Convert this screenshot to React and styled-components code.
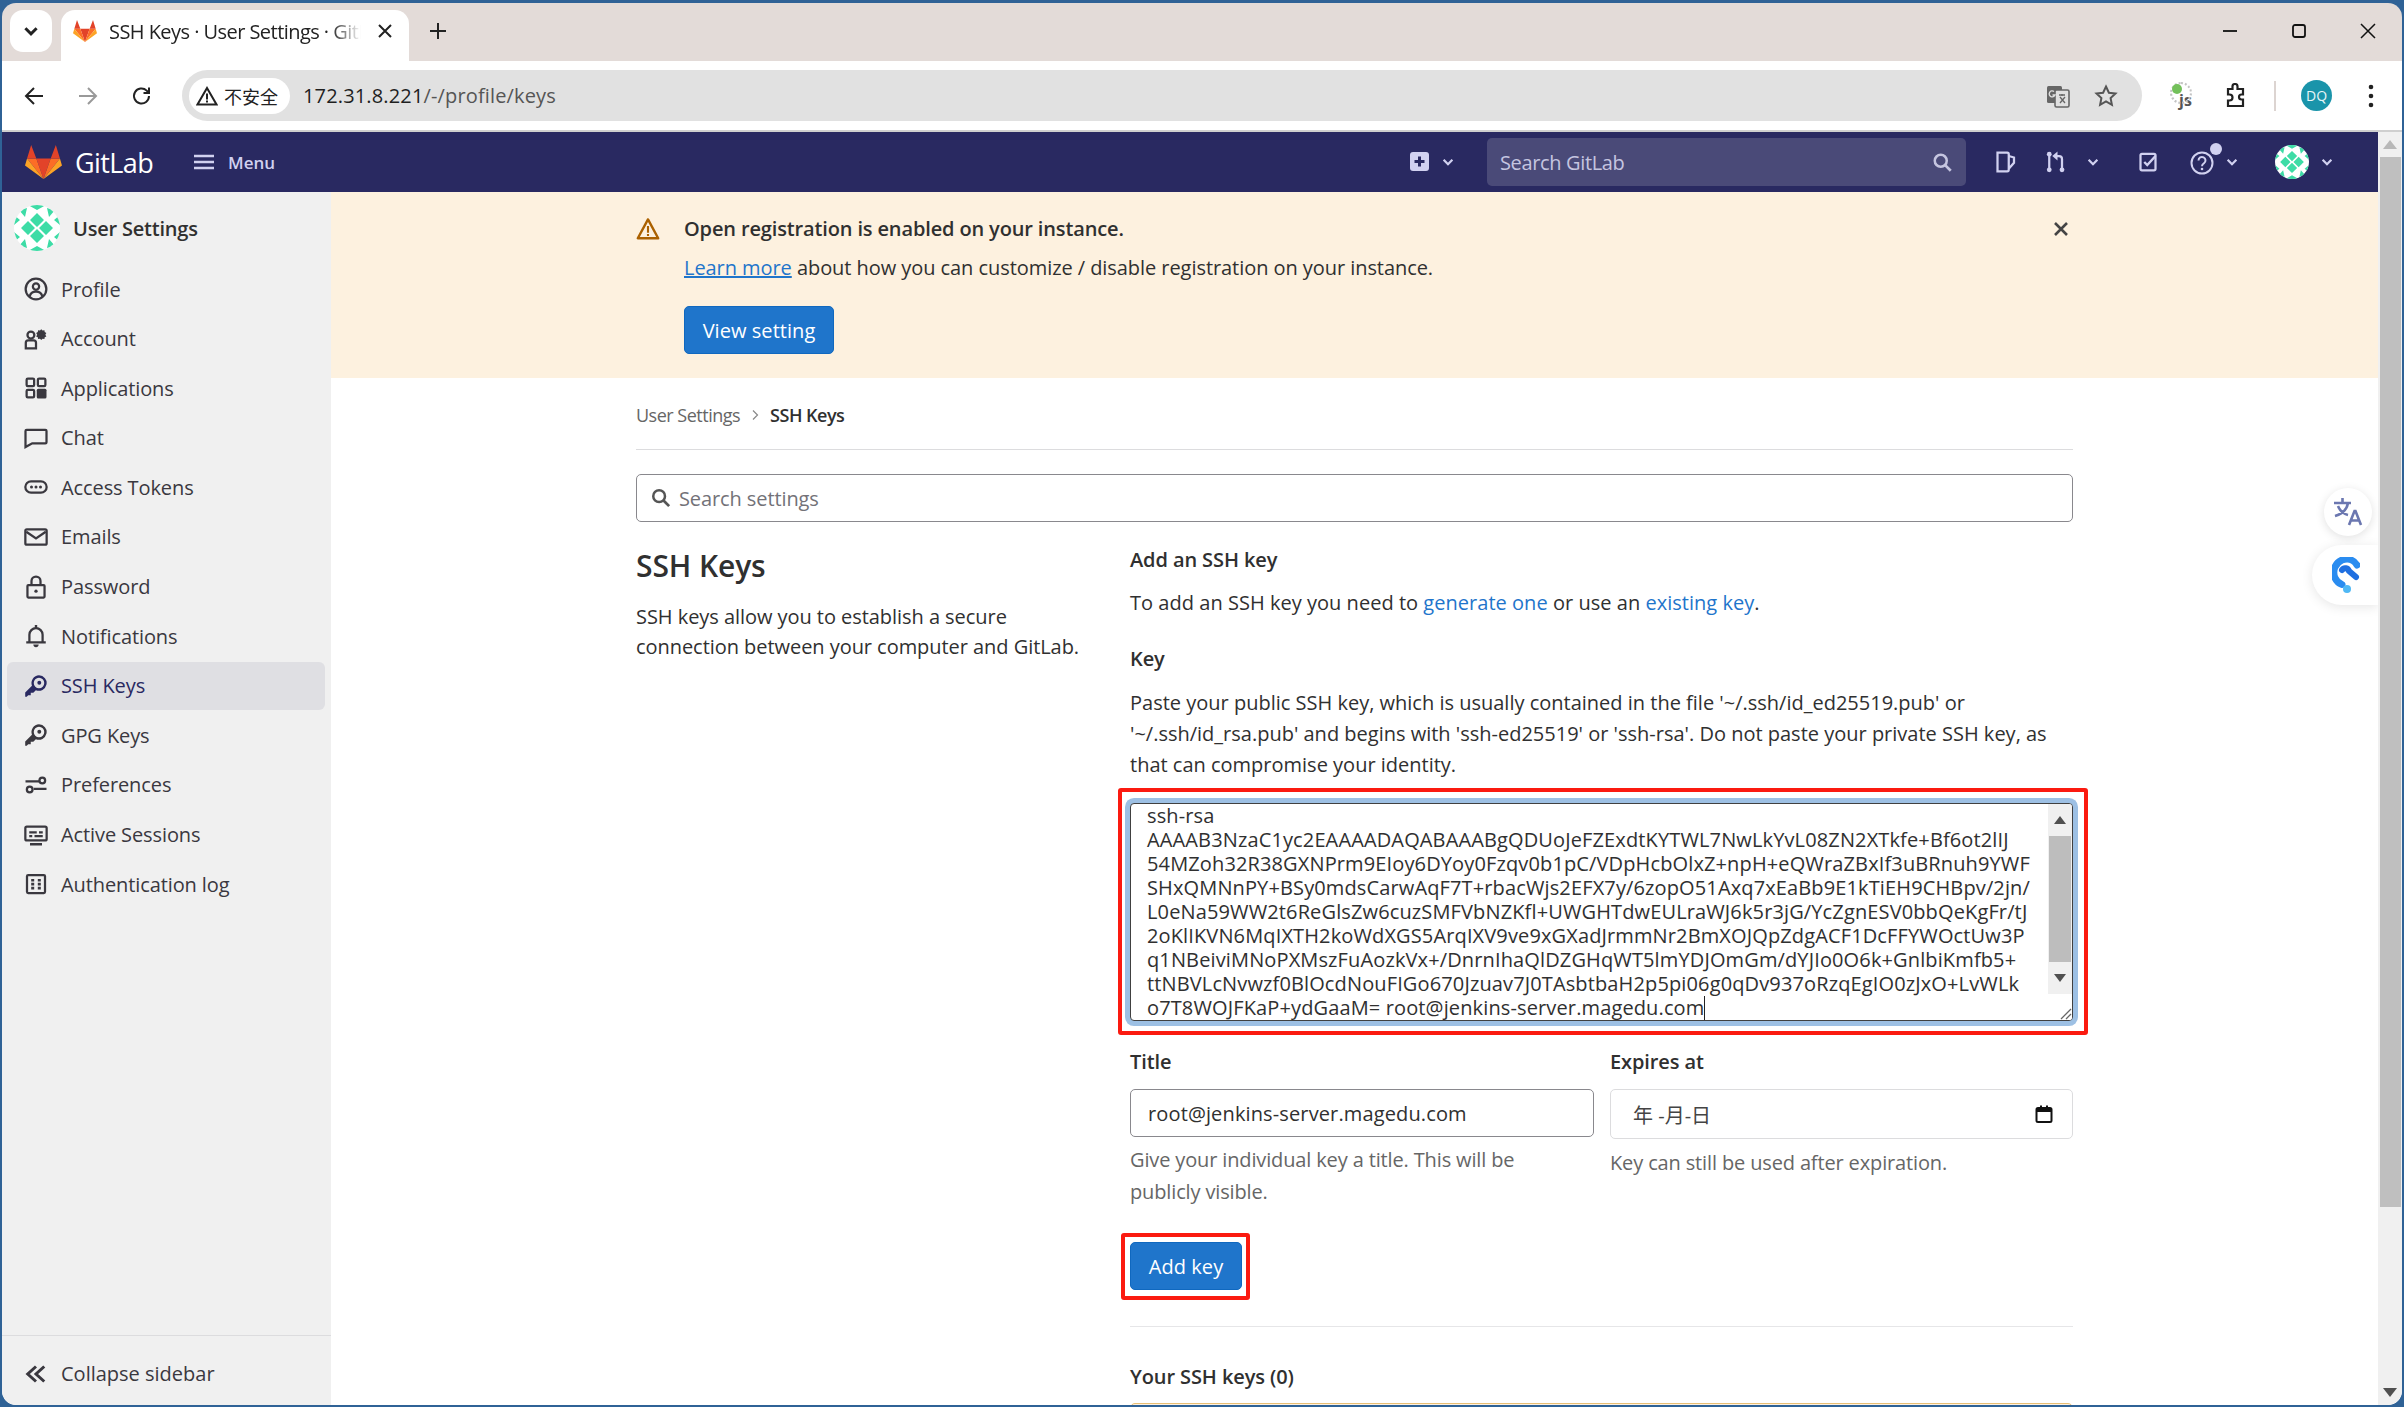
import styled, { createGlobalStyle } from 'styled-components';

const FONT = '"Open Sans", "Noto Sans CJK SC", sans-serif';

const GlobalStyle = createGlobalStyle`
  html, body {
    margin: 0;
    padding: 0;
    width: 2404px;
    height: 1407px;
    overflow: hidden;
    background: #2f6296;
    font-family: ${FONT};
  }
  * { box-sizing: border-box; }
`;

const KEY_LINES = [
  'ssh-rsa',
  'AAAAB3NzaC1yc2EAAAADAQABAAABgQDUoJeFZExdtKYTWL7NwLkYvL08ZN2XTkfe+Bf6ot2lIJ',
  '54MZoh32R38GXNPrm9EIoy6DYoy0Fzqv0b1pC/VDpHcbOlxZ+npH+eQWraZBxIf3uBRnuh9YWF',
  'SHxQMNnPY+BSy0mdsCarwAqF7T+rbacWjs2EFX7y/6zopO51Axq7xEaBb9E1kTiEH9CHBpv/2jn/',
  'L0eNa59WW2t6ReGlsZw6cuzSMFVbNZKfl+UWGHTdwEULraWJ6k5r3jG/YcZgnESV0bbQeKgFr/tJ',
  '2oKlIKVN6MqIXTH2koWdXGS5ArqIXV9ve9xGXadJrmmNr2BmXOJQpZdgACF1DcFFYWOctUw3P',
  'q1NBeiviMNoPXMszFuAozkVx+/DnrnIhaQlDZGHqWT5lmYDJOmGm/dYJIo0O6k+GnlbiKmfb5+',
  'ttNBVLcNvwzf0BlOcdNouFIGo670Jzuav7J0TAsbtbaH2p5pi06g0qDv937oRzqEgIO0zJxO+LvWLk',
];

const Tanuki = ({ size = 36 }) => (
  <svg width={size} height={size * 0.92} viewBox="0 0 36 33">
    <path fill="#e24329" d="M18 33 25 13H11z" />
    <path fill="#fc6d26" d="M18 33 11 13H2zM18 33l7-20h9z" />
    <path fill="#e24329" d="M2 13 6 0l5 13zM34 13 30 0l-5 13z" />
    <path fill="#fca326" d="M2 13 0 20l18 13zM34 13l2 7-18 13z" />
  </svg>
);

const Identicon = ({ size }) => (
  <svg width={size} height={size} viewBox="0 0 46 46">
    <defs>
      <clipPath id={`ring${size}`}><circle cx="23" cy="23" r="23" /></clipPath>
    </defs>
    <g clipPath={`url(#ring${size})`}>
      <rect width="46" height="46" fill="#fff" />
      <path fill="#3ddca6" d="M23 8l7 7-7 7-7-7zM14 16l7 7-7 7-7-7zM32 16l7 7-7 7-7-7zM23 24l7 7-7 7-7-7zM14 0h18l-9 5zM0 10l6 5-6 5zM46 10l-6 5 6 5zM0 27l6 5-6 5zM46 27l-6 5 6 5zM14 46h18l-9-5zM5 5l8-2-2 9zM41 5l-8-2 2 9zM5 41l8 2-2-9zM41 41l-8 2 2-9z" />
    </g>
  </svg>
);

const SideGlyph = ({ children, color = '#333238' }) => (
  <svg width="24" height="24" viewBox="0 0 16 16" fill={color} stroke="none">{children}</svg>
);

const lineProps = { fill: 'none', stroke: 'currentColor', strokeWidth: 1.5 };

const sideIcons = {
  profile: (
    <>
      <circle cx="8" cy="8" r="6.9" {...lineProps} />
      <circle cx="8" cy="6.4" r="2.1" {...lineProps} />
      <path {...lineProps} d="M3.8 13c.4-2.2 2-3.2 4.2-3.2s3.800 1 4.200 3.200" />
    </>
  ),
  account: (
    <>
      <circle cx="4.600" cy="5.400" r="2.300" {...lineProps} />
      <path {...lineProps} d="M1.200 14.300V10.500c0-1 .8-1.600 1.600-1.600h3.600c.9 0 1.600.6 1.600 1.600v3.800z" />
      <path d="M12 1.200l1 1.100 1.500-.3.200 1.500 1.300.8-.8 1.300.8 1.300-1.300.7-.2 1.400-1.500-.3-1 1-1-1-1.500.3-.2-1.400-1.300-.7.800-1.300-.8-1.300 1.300-.8.200-1.500 1.500.3z" transform="translate(1.300 .4) scale(.85)" />
    </>
  ),
  apps: (
    <>
      <rect x="1.750" y="1.750" width="5" height="5" rx=".8" {...lineProps} />
      <rect x="9.250" y="1.750" width="5" height="5" rx=".8" {...lineProps} />
      <rect x="1.750" y="9.250" width="5" height="5" rx=".8" {...lineProps} />
      <rect x="8.500" y="8.500" width="6.500" height="6.500" rx="1" />
    </>
  ),
  chat: <path {...lineProps} d="M1.750 2.500h12.500c.4 0 .75.300.75.750v7.500c0 .4-.3.750-.75.750H5.500L1 14V3.250c0-.4.300-.75.750-.75z" />,
  token: (
    <>
      <rect x=".9" y="4.200" width="14.200" height="7.600" rx="3.800" {...lineProps} />
      <circle cx="5" cy="8" r="1" /><circle cx="8" cy="8" r="1" /><circle cx="11" cy="8" r="1" />
    </>
  ),
  email: (
    <>
      <rect x=".9" y="2.900" width="14.200" height="10.200" rx="1" {...lineProps} />
      <path {...lineProps} d="M1.500 4.500 8 9l6.500-4.500" />
    </>
  ),
  lock: (
    <>
      <rect x="2.300" y="6.700" width="11.400" height="8.300" rx=".6" {...lineProps} />
      <path {...lineProps} d="M5 6.700V4a3 3 0 0 1 6 0v2.700" />
      <circle cx="8" cy="10.800" r="1.100" />
    </>
  ),
  bell: (
    <>
      <path {...lineProps} d="M3.600 12V7.200a4.400 4.400 0 0 1 8.800 0V12" />
      <path d="M1.500 11.500h13V13h-13zM6.200 13.700h3.600c0 1-.8 1.800-1.800 1.800s-1.800-.8-1.800-1.800zM7.200.6h1.600v2H7.200z" />
    </>
  ),
  key: (
    <>
      <path d="M10 .8a5.200 5.200 0 1 1-2.100 10L6.200 12.500H4.500V14.200H2.800L1.800 15.200H.8V12.300L5.300 7.800A5.200 5.200 0 0 1 10 .8zm0 1.700a3.500 3.500 0 1 0 0 7 3.500 3.500 0 0 0 0-7z" />
      <circle cx="10.200" cy="5.800" r="1.300" />
    </>
  ),
  prefs: (
    <>
      <path {...lineProps} d="M1 5.500h9.200M6.500 10.500H15" />
      <circle cx="12.200" cy="5" r="1.900" {...lineProps} />
      <circle cx="3.800" cy="11" r="1.900" {...lineProps} />
    </>
  ),
  sessions: (
    <>
      <rect x=".9" y="2.400" width="14.200" height="9.200" rx="1" {...lineProps} />
      <path d="M3.500 5.500h5V7h-5zM10 5.500h2.500V7H10zM3.500 8h2V9.500h-2zM7 8h5.500V9.500H7zM4 13.400h8V15H4z" />
    </>
  ),
  log: (
    <>
      <rect x="2" y="2" width="12" height="12" rx=".8" {...lineProps} />
      <path d="M4.800 4.600h2v1.800h-2zM9.200 4.600h2v1.800h-2zM4.800 7.200h2v1.800h-2zM9.200 7.200h2v1.800h-2zM4.800 9.800h2v1.800h-2zM9.200 9.800h2v1.800h-2z" />
    </>
  ),
  collapse: <path fill="none" stroke="currentColor" strokeWidth="2" d="M8 3 2.500 8 8 13M13.500 3 8 8l5.500 5" />,
};

const NAV_ITEMS = [
  ['profile', 'Profile'],
  ['account', 'Account'],
  ['apps', 'Applications'],
  ['chat', 'Chat'],
  ['token', 'Access Tokens'],
  ['email', 'Emails'],
  ['lock', 'Password'],
  ['bell', 'Notifications'],
  ['key', 'SSH Keys'],
  ['key', 'GPG Keys'],
  ['prefs', 'Preferences'],
  ['sessions', 'Active Sessions'],
  ['log', 'Authentication log'],
];

const Chevron = ({ size = 14, color = '#d1d1f0' }) => (
  <svg width={size} height={size} viewBox="0 0 16 16">
    <path d="M3 5.500 8 10.500 13 5.500" fill="none" stroke={color} strokeWidth="2.600" />
  </svg>
);

const NavIcon = ({ children, width = 24 }) => (
  <svg width={width} height="24" viewBox="0 0 16 16" fill="#d1d1f0">{children}</svg>
);

const navLine = { fill: 'none', stroke: '#d1d1f0', strokeWidth: 1.500 };

export default function App() {
  return (
    <Frame>
      <GlobalStyle />
      <TabStrip>
        <TabMenu>
          <Chevron size={18} color="#222" />
        </TabMenu>
        <Tab>
          <Tanuki size={24} />
          <TabTitle>SSH Keys · User Settings · GitLab</TabTitle>
          <TabClose>
            <svg width="16" height="16" viewBox="0 0 16 16"><path d="M2 2l12 12M14 2 2 14" stroke="#222" strokeWidth="2" /></svg>
          </TabClose>
        </Tab>
        <NewTab>
          <svg width="18" height="18" viewBox="0 0 18 18"><path d="M9 1v16M1 9h16" stroke="#222" strokeWidth="2" /></svg>
        </NewTab>
        <WindowControls>
          <svg width="16" height="16" viewBox="0 0 16 16"><path d="M1 8h14" stroke="#111" strokeWidth="1.800" /></svg>
          <svg width="16" height="16" viewBox="0 0 16 16"><rect x="2" y="2" width="12" height="12" rx="2" fill="none" stroke="#111" strokeWidth="1.800" /></svg>
          <svg width="16" height="16" viewBox="0 0 16 16"><path d="M1 1l14 14M15 1 1 15" stroke="#111" strokeWidth="1.500" /></svg>
        </WindowControls>
      </TabStrip>

      <Toolbar>
        <ToolIcon>
          <svg width="22" height="22" viewBox="0 0 22 22"><path d="M20 11H3M11 3l-8 8 8 8" fill="none" stroke="#222" strokeWidth="2" /></svg>
        </ToolIcon>
        <ToolIcon>
          <svg width="22" height="22" viewBox="0 0 22 22"><path d="M2 11h17M11 3l8 8-8 8" fill="none" stroke="#999" strokeWidth="2" /></svg>
        </ToolIcon>
        <ToolIcon>
          <svg width="22" height="22" viewBox="0 0 22 22"><path d="M18 11a7.500 7.500 0 1 1-2.300-5.400L18 8M18 2.500V8h-5.500" fill="none" stroke="#222" strokeWidth="2" /></svg>
        </ToolIcon>
        <Omnibox>
          <SecurityChip>
            <svg width="22" height="20" viewBox="0 0 22 20"><path d="M11 2 1.500 18.500h19z" fill="none" stroke="#222" strokeWidth="2" /><path d="M10 7.500h2v6h-2zM10 14.500h2v2h-2z" fill="#222" /></svg>
            不安全
          </SecurityChip>
          <Url><b>172.31.8.221</b>/-/profile/keys</Url>
          <OmniActions>
            <svg width="24" height="24" viewBox="0 0 24 24"><rect x="1" y="2" width="15" height="17" rx="1.500" fill="#666" /><rect x="9" y="6" width="14" height="17" rx="1.500" fill="#e0e0e0" stroke="#666" strokeWidth="1.600" /><path d="M13 11h6M16 10v2M14 19l5-6M14 13l5 6" stroke="#666" strokeWidth="1.300" /><path d="M8 7.500a3 3 0 1 0 1 3.500H6.500" fill="none" stroke="#e0e0e0" strokeWidth="1.300" /></svg>
            <svg width="24" height="24" viewBox="0 0 24 24"><path d="M12 2.500l2.900 6.200 6.600.8-4.900 4.600 1.300 6.700L12 17.500l-5.900 3.300 1.300-6.700-4.900-4.600 6.600-.8z" fill="none" stroke="#555" strokeWidth="2" /></svg>
          </OmniActions>
        </Omnibox>
        <ToolEnd>
          <JsBadge>
            <JsRing />
            <JsDot />
            js
          </JsBadge>
          <svg width="20" height="26" viewBox="0 0 20 26"><path d="M2 6h4.500V3.500a2.500 2.500 0 0 1 5 0V6H17v5.500h-1.500a2.500 2.500 0 0 0 0 5H17V23H2v-5.500h1.500a3 3 0 0 0 0-6H2z" fill="none" stroke="#222" strokeWidth="2.200" /></svg>
          <ToolSep />
          <ProfileChip>DQ</ProfileChip>
          <svg width="6" height="26" viewBox="0 0 6 26"><circle cx="3" cy="4" r="2.300" fill="#222" /><circle cx="3" cy="13" r="2.300" fill="#222" /><circle cx="3" cy="22" r="2.300" fill="#222" /></svg>
        </ToolEnd>
      </Toolbar>

      <Viewport>
        <PageColumn>
          <TopNav>
            <Brand>
              <Tanuki size={37} />
              <BrandName>GitLab</BrandName>
            </Brand>
            <MenuButton>
              <svg width="20" height="18" viewBox="0 0 20 18"><path d="M0 3h20M0 9h20M0 15h20" stroke="#d1d1f0" strokeWidth="2.400" /></svg>
              Menu
            </MenuButton>
            <NavEnd>
              <NavSlot $width={46}>
                <svg width="22" height="22" viewBox="0 0 22 22"><rect x="1" y="1" width="19" height="19" rx="3" fill="#d1d1f0" /><path d="M10.500 5.500v10M5.500 10.500h10" stroke="#292961" strokeWidth="3" /></svg>
                <Chevron />
              </NavSlot>
              <NavSearch>
                Search GitLab
                <svg width="20" height="20" viewBox="0 0 16 16"><circle cx="7" cy="7" r="4.800" fill="none" stroke="#c5c5e0" strokeWidth="2" /><path d="M10.500 10.500 15 15" stroke="#c5c5e0" strokeWidth="2.200" /></svg>
              </NavSearch>
              <NavSlot $width={24} $left={27}>
                <NavIcon>
                  <path {...navLine} d="M3 1.800h6.500c.6 0 1 .4 1 1V13c0 .6-.4 1.200-1 1.200H3zM10.500 4l3.500 1v3.500l-3.500 4" />
                </NavIcon>
              </NavSlot>
              <NavSlot $width={56} $left={27}>
                <NavIcon>
                  <circle cx="3.500" cy="2.800" r="1.600" /><circle cx="3.500" cy="13.200" r="1.600" /><circle cx="12" cy="13.200" r="1.600" />
                  <path {...navLine} d="M3.500 3v10M12 13V6c0-1-.7-2-2-2H7.500" />
                  <path d="M9 1v6L5.500 4z" />
                </NavIcon>
                <Chevron />
              </NavSlot>
              <NavSlot $width={24} $left={36}>
                <NavIcon>
                  <rect x="3" y="2.500" width="10" height="11" rx="1" fill="none" stroke="#d1d1f0" strokeWidth="1.500" />
                  <path d="M5.500 8l2 2L13 4" fill="none" stroke="#d1d1f0" strokeWidth="1.600" />
                </NavIcon>
              </NavSlot>
              <HelpGroup>
                <svg width="26" height="26" viewBox="0 0 26 26"><circle cx="12" cy="14" r="10.500" fill="none" stroke="#d1d1f0" strokeWidth="2" /><path d="M8.500 11.500a3.500 3.500 0 1 1 5.500 2.800c-1.300.9-2 1.500-2 3" fill="none" stroke="#d1d1f0" strokeWidth="2" /><circle cx="12" cy="20" r="1.300" fill="#d1d1f0" /></svg>
                <HelpDot />
                <Chevron />
              </HelpGroup>
              <NavSlot $width={59} $left={36}>
                <Identicon size={34} />
                <Chevron />
              </NavSlot>
            </NavEnd>
          </TopNav>

          <Body>
            <Sidebar>
              <SideHead>
                <Identicon size={46} />
                <SideTitle>User Settings</SideTitle>
              </SideHead>
              <SideList>
                {NAV_ITEMS.map(([icon, label]) => {
                  const active = label === 'SSH Keys';
                  return (
                    <SideItem key={label} $active={active}>
                      <SideGlyph color="currentColor">{sideIcons[icon]}</SideGlyph>
                      <span>{label}</span>
                    </SideItem>
                  );
                })}
              </SideList>
              <CollapseRow>
                <SideGlyph color="currentColor">{sideIcons.collapse}</SideGlyph>
                <span>Collapse sidebar</span>
              </CollapseRow>
            </Sidebar>

            <Main>
              <Banner>
                <Container>
                  <BannerRow>
                    <WarnIcon>
                      <svg width="24" height="24" viewBox="0 0 16 16"><path d="M8 1.600 1.200 14.200h13.600z" fill="none" stroke="#ab6100" strokeWidth="1.600" strokeLinejoin="round" /><path d="M7.300 6h1.400v4.500H7.300zM7.300 11.300h1.400v1.400H7.300z" fill="#ab6100" /></svg>
                    </WarnIcon>
                    <BannerText>
                      <BannerTitle>Open registration is enabled on your instance.</BannerTitle>
                      <BannerBody><BannerLink>Learn more</BannerLink> about how you can customize / disable registration on your instance.</BannerBody>
                      <PrimaryButton $width={150} $top={23}>View setting</PrimaryButton>
                    </BannerText>
                    <BannerClose>
                      <svg width="16" height="16" viewBox="0 0 16 16"><path d="M2 2l12 12M14 2 2 14" stroke="#444" strokeWidth="2.600" /></svg>
                    </BannerClose>
                  </BannerRow>
                </Container>
              </Banner>

              <Container>
                <Breadcrumbs>
                  <CrumbLink>User Settings</CrumbLink>
                  <svg width="10" height="12" viewBox="0 0 10 12"><path d="M3 1.500 7.500 6 3 10.500" fill="none" stroke="#888" strokeWidth="1.200" /></svg>
                  <CrumbCurrent>SSH Keys</CrumbCurrent>
                </Breadcrumbs>
                <SettingsSearch>
                  <svg width="20" height="20" viewBox="0 0 16 16"><circle cx="6.500" cy="6.500" r="4.700" fill="none" stroke="#555" strokeWidth="2" /><path d="M10 10l4.500 4.500" stroke="#555" strokeWidth="2.200" /></svg>
                  Search settings
                </SettingsSearch>

                <SettingsGrid>
                  <IntroColumn>
                    <IntroTitle>SSH Keys</IntroTitle>
                    <IntroText>SSH keys allow you to establish a secure connection between your computer and GitLab.</IntroText>
                  </IntroColumn>
                  <FormColumn>
                    <Label $top={0}>Add an SSH key</Label>
                    <Paragraph $top={13}>
                      To add an SSH key you need to <TextLink>generate one</TextLink> or use an <TextLink>existing key</TextLink>.
                    </Paragraph>
                    <Label $top={26}>Key</Label>
                    <KeyHelp>
                      Paste your public SSH key, which is usually contained in the file '~/.ssh/id_ed25519.pub' or<br />
                      '~/.ssh/id_rsa.pub' and begins with 'ssh-ed25519' or 'ssh-rsa'. Do not paste your private SSH key, as<br />
                      that can compromise your identity.
                    </KeyHelp>
                    <KeyMark>
                      <KeyArea>
                        <KeyText>
                          {KEY_LINES.map((line) => <KeyLine key={line}>{line}</KeyLine>)}
                          <KeyLine>o7T8WOJFKaP+ydGaaM= root@jenkins-server.magedu.com<Caret /></KeyLine>
                        </KeyText>
                        <KeyScroll>
                          <ScrollArrow>
                            <svg width="12" height="8" viewBox="0 0 12 8"><path d="M6 0l6 8H0z" fill="#505050" /></svg>
                          </ScrollArrow>
                          <ScrollThumb />
                          <ScrollArrow>
                            <svg width="12" height="8" viewBox="0 0 12 8"><path d="M6 8l6-8H0z" fill="#505050" /></svg>
                          </ScrollArrow>
                          <ScrollGrip>
                            <svg width="14" height="14" viewBox="0 0 14 14"><path d="M13 3 3 13M13 8l-5 5" stroke="#666" strokeWidth="1.300" /></svg>
                          </ScrollGrip>
                        </KeyScroll>
                      </KeyArea>
                    </KeyMark>
                    <FieldGrid>
                      <Field>
                        <Label $top={0}>Title</Label>
                        <TextField>root@jenkins-server.magedu.com</TextField>
                        <FieldHelp $top={7}>Give your individual key a title. This will be<br />publicly visible.</FieldHelp>
                      </Field>
                      <Field>
                        <Label $top={0}>Expires at</Label>
                        <DateField>
                          <DateText>年 -月-日</DateText>
                          <svg width="20" height="20" viewBox="0 0 20 20"><rect x="2.500" y="4" width="15" height="14" rx="1.500" fill="none" stroke="#111" strokeWidth="2" /><path d="M2.500 4.500h15v3.500h-15zM6 1.500h2v3H6zM12 1.500h2v3h-2z" fill="#111" /></svg>
                        </DateField>
                        <FieldHelp $top={8}>Key can still be used after expiration.</FieldHelp>
                      </Field>
                    </FieldGrid>
                    <ButtonMark>
                      <PrimaryButton $width={112}>Add key</PrimaryButton>
                    </ButtonMark>
                    <Divider />
                    <Label $top={0}>Your SSH keys (0)</Label>
                    <EmptyNotice />
                  </FormColumn>
                </SettingsGrid>
              </Container>
              <FloatCircle>
                <svg width="32" height="32" viewBox="0 0 32 32" fill="none" stroke="#6b77b0" strokeWidth="2.600"><path d="M2 7h17M10.500 2v5M16 7c-1 6-6 11-13 13M6 10c2 5 6 8 10 9" /><path d="M17 29l5.500-14h1L29 29M19 24.500h8" /></svg>
              </FloatCircle>
              <FloatPill>
                <svg width="28" height="36" viewBox="0 0 28 36"><path d="M25 8C22 3 16 1 10 3 3 6 0 14 3 21c1.500 3.500 4 5.500 7 6.500" fill="none" stroke="#2a8cf0" strokeWidth="7" strokeLinecap="round" /><path d="M10 13c2-3 6-2 7 1l7 6" fill="none" stroke="#1f6fe0" strokeWidth="6" strokeLinecap="round" /><circle cx="15" cy="32" r="4" fill="#4fb8f5" /></svg>
              </FloatPill>
            </Main>
          </Body>
        </PageColumn>

        <PageScroll>
          <PageArrow>
            <svg width="14" height="9" viewBox="0 0 14 9"><path d="M7 0l7 9H0z" fill="#b8b8b8" /></svg>
          </PageArrow>
          <PageThumb />
          <PageArrow>
            <svg width="14" height="9" viewBox="0 0 14 9"><path d="M7 9l7-9H0z" fill="#505050" /></svg>
          </PageArrow>
        </PageScroll>
      </Viewport>
    </Frame>
  );
}

const Frame = styled.div`
  width: 2404px;
  height: 1407px;
  padding: 3px 2px 2px;
  display: flex;
  flex-direction: column;
  overflow: hidden;
`;

const TabStrip = styled.div`
  height: 58px;
  flex: none;
  display: flex;
  align-items: flex-start;
  padding: 7px 0 0 8px;
  background: #e3dbd8;
  border-radius: 14px 14px 0 0;
`;

const TabMenu = styled.div`
  width: 42px;
  height: 42px;
  border-radius: 13px;
  background: #fff;
  display: flex;
  align-items: center;
  justify-content: center;
`;

const Tab = styled.div`
  width: 348px;
  height: 51px;
  margin-left: 9px;
  padding: 0 16px 9px 12px;
  background: #fff;
  border-radius: 14px 14px 0 0;
  display: flex;
  align-items: center;
  gap: 12px;
`;

const TabTitle = styled.span`
  width: 252px;
  flex: none;
  font-size: 20px;
  letter-spacing: -0.55px;
  color: #222;
  white-space: nowrap;
  overflow: hidden;
  -webkit-mask-image: linear-gradient(to right, #000 88%, transparent);
  mask-image: linear-gradient(to right, #000 88%, transparent);
`;

const TabClose = styled.span`
  display: flex;
  margin-left: 4px;
`;

const NewTab = styled.div`
  height: 42px;
  margin-left: 20px;
  display: flex;
  align-items: center;
`;

const WindowControls = styled.div`
  margin-left: auto;
  height: 42px;
  width: 200px;
  padding-left: 20px;
  display: flex;
  align-items: center;
  gap: 53px;
`;

const Toolbar = styled.div`
  height: 71px;
  flex: none;
  padding: 9px 0 0 5px;
  background: #fff;
  border-bottom: 2px solid #cfcfcf;
  display: flex;
  align-items: flex-start;
`;

const ToolIcon = styled.div`
  width: 54px;
  height: 51px;
  display: flex;
  align-items: center;
  justify-content: center;
  flex: none;
`;

const Omnibox = styled.div`
  width: 1960px;
  height: 51px;
  margin-left: 13px;
  padding: 0 24px 0 7px;
  flex: none;
  background: #e1e1e1;
  border-radius: 26px;
  display: flex;
  align-items: center;
`;

const SecurityChip = styled.div`
  width: 101px;
  height: 36px;
  padding-left: 7px;
  flex: none;
  background: #fff;
  border-radius: 18px;
  display: flex;
  align-items: center;
  gap: 6px;
  font-size: 18px;
  color: #222;
`;

const Url = styled.div`
  margin-left: 13px;
  font-size: 20px;
  letter-spacing: 0.15px;
  color: #555;
  b {
    font-weight: 400;
    color: #1f1f1f;
  }
`;

const OmniActions = styled.div`
  margin-left: auto;
  display: flex;
  gap: 24px;
  align-items: center;
`;

const ToolEnd = styled.div`
  height: 51px;
  margin-left: 28px;
  display: flex;
  align-items: center;
  & > svg:nth-of-type(1) {
    margin-left: 30px;
  }
`;

const JsBadge = styled.div`
  position: relative;
  width: 26px;
  height: 30px;
  padding: 11px 0 0 9px;
  font-size: 16px;
  font-weight: 700;
  line-height: 16px;
  color: #555;
`;

const JsRing = styled.span`
  position: absolute;
  top: 1px;
  left: 0;
  width: 22px;
  height: 22px;
  border: 2px dotted #c4c4c4;
  border-radius: 50%;
`;

const JsDot = styled.span`
  position: absolute;
  top: 3px;
  left: 2px;
  width: 10px;
  height: 10px;
  border-radius: 50%;
  background: #73c05a;
`;

const ToolSep = styled.div`
  width: 2px;
  height: 30px;
  margin: 0 25px 0 28px;
  background: #dcd4d1;
`;

const ProfileChip = styled.div`
  width: 31px;
  height: 31px;
  margin-right: 36px;
  border-radius: 50%;
  background: #1a94aa;
  color: #e8f6f8;
  font-size: 14px;
  display: flex;
  align-items: center;
  justify-content: center;
`;

const Viewport = styled.div`
  flex: 1;
  min-height: 0;
  display: flex;
  background: #fff;
  border-radius: 0 0 14px 14px;
  overflow: hidden;
`;

const PageColumn = styled.div`
  flex: 1;
  min-width: 0;
  display: flex;
  flex-direction: column;
`;

const TopNav = styled.header`
  height: 60px;
  flex: none;
  padding-left: 23px;
  background: #292961;
  display: flex;
  align-items: center;
`;

const Brand = styled.div`
  display: flex;
  align-items: center;
  gap: 13px;
`;

const BrandName = styled.span`
  font-size: 27px;
  font-weight: 400;
  letter-spacing: -0.6px;
  color: #fff;
`;

const MenuButton = styled.div`
  margin-left: 41px;
  display: flex;
  align-items: center;
  gap: 14px;
  font-size: 17px;
  font-weight: 600;
  color: #d1d1f0;
`;

const NavEnd = styled.div`
  margin-left: auto;
  padding-right: 44px;
  display: flex;
  align-items: center;
`;

const NavSlot = styled.div`
  width: ${(p) => p.$width}px;
  margin-left: ${(p) => p.$left || 0}px;
  flex: none;
  display: flex;
  align-items: center;
  justify-content: space-between;
`;

const NavSearch = styled.div`
  width: 479px;
  height: 48px;
  margin-left: 32px;
  padding: 0 14px 0 13px;
  background: #4a4a78;
  border-radius: 5px;
  display: flex;
  align-items: center;
  justify-content: space-between;
  font-size: 20px;
  letter-spacing: -0.35px;
  color: #c5c5e0;
`;

const HelpGroup = styled.div`
  position: relative;
  width: 49px;
  margin-left: 30px;
  flex: none;
  display: flex;
  align-items: center;
  justify-content: space-between;
`;

const HelpDot = styled.span`
  position: absolute;
  top: -6px;
  left: 20px;
  width: 12px;
  height: 12px;
  border-radius: 50%;
  background: #d1d1f0;
`;

const Body = styled.div`
  flex: 1;
  min-height: 0;
  display: flex;
`;

const Sidebar = styled.aside`
  width: 329px;
  flex: none;
  background: #f0f0f0;
  display: flex;
  flex-direction: column;
  border-bottom-left-radius: 14px;
`;

const SideHead = styled.div`
  height: 73px;
  padding: 13px 0 0 12px;
  display: flex;
  align-items: flex-start;
  gap: 13px;
`;

const SideTitle = styled.span`
  font-size: 20px;
  font-weight: 600;
  line-height: 48px;
  letter-spacing: -0.2px;
  color: #303030;
`;

const SideList = styled.nav`
  padding: 0 6px 0 5px;
  display: flex;
  flex-direction: column;
  gap: 1.6px;
`;

const SideItem = styled.div`
  height: 48px;
  padding-left: 17px;
  border-radius: 6px;
  display: flex;
  align-items: center;
  gap: 13px;
  font-size: 20px;
  letter-spacing: -0.1px;
  color: ${(p) => (p.$active ? '#292961' : '#3a383f')};
  background: ${(p) => (p.$active ? '#dfdfe3' : 'transparent')};
`;

const CollapseRow = styled.div`
  margin-top: auto;
  height: 70px;
  padding: 6px 0 0 22px;
  border-top: 1px solid #dcdcde;
  display: flex;
  align-items: center;
  gap: 13px;
  font-size: 20px;
  color: #3a383f;
`;

const Main = styled.main`
  position: relative;
  flex: 1;
  min-width: 0;
  overflow: hidden;
`;

const Container = styled.div`
  width: 1437px;
  margin: 0 auto;
`;

const Banner = styled.section`
  height: 186px;
  background: #fdf1df;
`;

const BannerRow = styled.div`
  display: flex;
  align-items: flex-start;
  padding-top: 22px;
`;

const WarnIcon = styled.div`
  width: 48px;
  height: 30px;
  flex: none;
  display: flex;
  align-items: center;
`;

const BannerText = styled.div`
  flex: 1;
`;

const BannerClose = styled.div`
  width: 24px;
  height: 30px;
  padding-right: 4px;
  flex: none;
  display: flex;
  align-items: center;
  justify-content: flex-end;
`;

const BannerTitle = styled.div`
  font-size: 20px;
  font-weight: 600;
  line-height: 30px;
  letter-spacing: -0.14px;
  color: #303030;
`;

const BannerBody = styled.div`
  margin-top: 9px;
  font-size: 20px;
  line-height: 30px;
  letter-spacing: -0.06px;
  color: #303030;
`;

const BannerLink = styled.a`
  color: #1f75cb;
  text-decoration: underline;
`;

const PrimaryButton = styled.div`
  width: ${(p) => p.$width}px;
  height: 48px;
  margin-top: ${(p) => p.$top || 0}px;
  background: #1f75cb;
  border: 1px solid #1068bf;
  border-radius: 5px;
  color: #fff;
  font-size: 20px;
  letter-spacing: 0.05px;
  display: flex;
  align-items: center;
  justify-content: center;
`;

const Breadcrumbs = styled.div`
  height: 72px;
  padding: 22px 0 19px;
  border-bottom: 1px solid #dcdcde;
  display: flex;
  align-items: center;
  gap: 10px;
  font-size: 18px;
`;

const CrumbLink = styled.span`
  color: #666;
  letter-spacing: -0.5px;
`;

const CrumbCurrent = styled.span`
  color: #303030;
  font-weight: 600;
  letter-spacing: -0.5px;
`;

const SettingsSearch = styled.div`
  height: 48px;
  margin-top: 24px;
  padding-left: 14px;
  border: 1.500px solid #89888d;
  border-radius: 5px;
  display: flex;
  align-items: center;
  gap: 8px;
  font-size: 20px;
  letter-spacing: -0.1px;
  color: #737278;
`;

const SettingsGrid = styled.div`
  display: grid;
  grid-template-columns: 494px 943px;
`;

const IntroColumn = styled.div`
  padding-top: 24px;
`;

const IntroTitle = styled.h2`
  margin: 0;
  font-size: 30px;
  line-height: 40px;
  font-weight: 600;
  letter-spacing: -0.1px;
  color: #303030;
`;

const IntroText = styled.p`
  width: 470px;
  margin: 16px 0 0;
  font-size: 20px;
  line-height: 30px;
  letter-spacing: -0.05px;
  color: #303030;
`;

const FormColumn = styled.div`
  padding-top: 23px;
`;

const Label = styled.div`
  margin-top: ${(p) => p.$top}px;
  font-size: 20px;
  line-height: 30px;
  font-weight: 600;
  letter-spacing: -0.1px;
  color: #303030;
`;

const Paragraph = styled.p`
  margin: ${(p) => p.$top}px 0 0;
  font-size: 20px;
  line-height: 30px;
  letter-spacing: 0.03px;
  color: #303030;
`;

const TextLink = styled.a`
  color: #1f75cb;
`;

const KeyHelp = styled.p`
  margin: 13px 0 0;
  font-size: 20px;
  line-height: 31px;
  white-space: nowrap;
  color: #303030;
`;

const KeyMark = styled.div`
  position: relative;
  margin-top: 23px;
  &::after {
    content: '';
    position: absolute;
    inset: -15px -15px -14px -12px;
    border: 4px solid #fb1a10;
    border-radius: 3px;
    pointer-events: none;
  }
`;

const KeyArea = styled.div`
  height: 218px;
  border: 1.500px solid #404040;
  border-radius: 4px;
  box-shadow: 0 0 0 5px #9dc0e4;
  display: flex;
  overflow: hidden;
  background: #fff;
`;

const KeyText = styled.div`
  flex: 1;
  padding: 0 0 0 16px;
  font-size: 20px;
  line-height: 24px;
  letter-spacing: 0.13px;
  color: #303030;
  white-space: nowrap;
  overflow: hidden;
`;

const KeyLine = styled.div`
  height: 24px;
`;

const Caret = styled.span`
  display: inline-block;
  width: 1px;
  height: 24px;
  vertical-align: top;
  background: #222;
`;

const KeyScroll = styled.div`
  width: 24px;
  flex: none;
  background: #f0f0f0;
  display: flex;
  flex-direction: column;
`;

const ScrollArrow = styled.div`
  height: 32px;
  flex: none;
  display: flex;
  align-items: center;
  justify-content: center;
`;

const ScrollThumb = styled.div`
  height: 126px;
  flex: none;
  margin: 0 1px;
  background: #bdbdbd;
`;

const ScrollGrip = styled.div`
  flex: 1;
  background: #fff;
  display: flex;
  align-items: flex-end;
  justify-content: flex-end;
`;

const FieldGrid = styled.div`
  margin-top: 26px;
  display: grid;
  grid-template-columns: 464px 463px;
  gap: 16px;
`;

const Field = styled.div`
  min-width: 0;
`;

const TextField = styled.div`
  height: 48px;
  margin-top: 12px;
  padding-left: 17px;
  border: 1.500px solid #89888d;
  border-radius: 5px;
  display: flex;
  align-items: center;
  font-size: 20px;
  letter-spacing: 0.13px;
  color: #303030;
`;

const DateField = styled.div`
  height: 50px;
  margin-top: 12px;
  padding: 0 18px 0 22px;
  border: 1.500px solid #dcdcde;
  border-radius: 5px;
  display: flex;
  align-items: center;
  justify-content: space-between;
`;

const DateText = styled.span`
  font-size: 20px;
  color: #444;
`;

const FieldHelp = styled.p`
  margin: ${(p) => p.$top}px 0 0;
  font-size: 20px;
  line-height: 32px;
  letter-spacing: -0.14px;
  color: #666;
`;

const ButtonMark = styled.div`
  position: relative;
  width: 112px;
  margin-top: 34px;
  &::after {
    content: '';
    position: absolute;
    inset: -9px -8px -10px -9px;
    border: 4px solid #fb1a10;
    border-radius: 3px;
    pointer-events: none;
  }
`;

const Divider = styled.hr`
  margin: 36px 0 35px;
  border: 0;
  border-top: 1px solid #e6e6e8;
`;

const EmptyNotice = styled.div`
  height: 60px;
  margin-top: 11px;
  background: #fdf1df;
  border: 1px solid #e9be74;
  border-radius: 5px;
`;

const FloatCircle = styled.div`
  position: absolute;
  top: 296px;
  right: 6px;
  width: 48px;
  height: 48px;
  border-radius: 50%;
  background: #fff;
  box-shadow: 0 2px 10px rgba(0, 0, 0, 0.12);
  display: flex;
  align-items: center;
  justify-content: center;
`;

const FloatPill = styled.div`
  position: absolute;
  top: 353px;
  right: 0;
  width: 66px;
  height: 60px;
  padding-left: 20px;
  border-radius: 30px 0 0 30px;
  background: #fff;
  box-shadow: 0 2px 12px rgba(0, 0, 0, 0.1);
  display: flex;
  align-items: center;
`;

const PageScroll = styled.div`
  width: 24px;
  flex: none;
  background: #f0f0f0;
  display: flex;
  flex-direction: column;
  border-bottom-right-radius: 14px;
`;

const PageArrow = styled.div`
  height: 25px;
  flex: none;
  display: flex;
  align-items: center;
  justify-content: center;
`;

const PageThumb = styled.div`
  height: 1050px;
  flex: none;
  margin: 0 1px 0 2px;
  background: #bfbfbf;
  & + div {
    margin-top: auto;
  }
`;
